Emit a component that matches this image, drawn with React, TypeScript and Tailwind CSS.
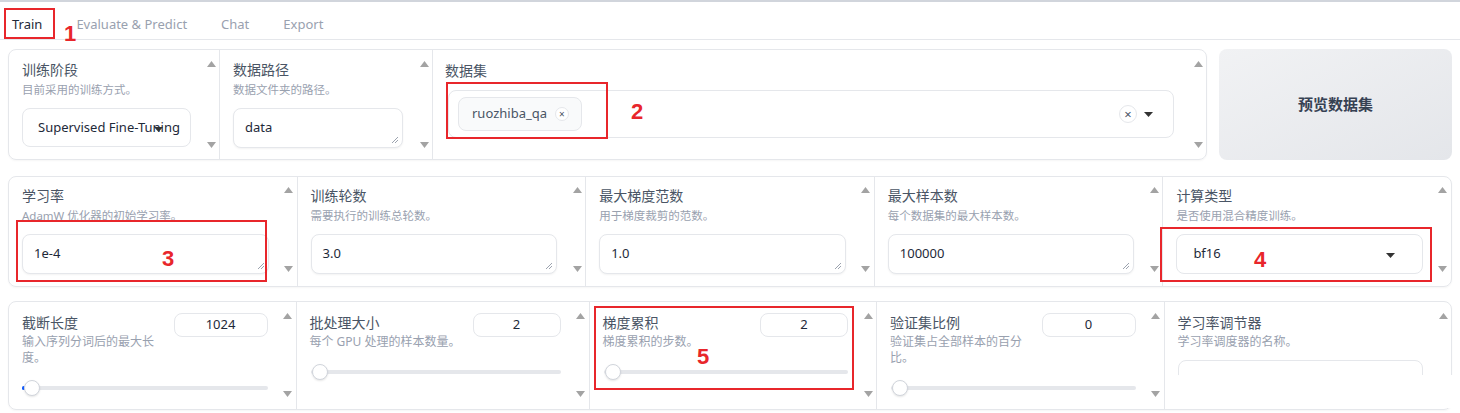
import React from 'react';

const Up = () => (
  <svg width="9" height="6" viewBox="0 0 9 6">
    <path d="M4.5 0L9 6H0z" fill="#a3a3a3" />
  </svg>
);
const Down = () => (
  <svg width="9" height="6" viewBox="0 0 9 6">
    <path d="M0 0h9L4.5 6z" fill="#a3a3a3" />
  </svg>
);
const Caret = () => (
  <svg width="9" height="5" viewBox="0 0 9 5">
    <path d="M0 0h9L4.5 5z" fill="#333" />
  </svg>
);

function Arrows({ top = 'pt-[11px]', bottom = 'pb-[11px]' }: { top?: string; bottom?: string }) {
  return (
    <div className={`w-[16px] shrink-0 flex flex-col items-center justify-between ${top} ${bottom}`}>
      <Up />
      <Down />
    </div>
  );
}

function Grip() {
  return (
    <svg className="absolute right-[3px] bottom-[3px]" width="8" height="8" viewBox="0 0 8 8">
      <path d="M7 1L1 7M7 4L4 7" stroke="#9ca3af" strokeWidth="1" />
    </svg>
  );
}

function TextBox({ value }: { value: string }) {
  return (
    <div className="relative h-[40px] rounded-lg border border-gray-200 bg-white shadow-[0_1px_2px_rgba(0,0,0,0.05)] flex items-center px-[11px] text-[13px] text-gray-800">
      {value}
      <Grip />
    </div>
  );
}

function Label({ text }: { text: string }) {
  return <div className="text-[14px] leading-[20px] text-gray-600">{text}</div>;
}

function Desc({ text, className = '' }: { text: string; className?: string }) {
  return <div className={`text-[11.5px] leading-[16px] text-gray-400 ${className}`}>{text}</div>;
}

function FieldCol({ label, desc, children, last }: { label: string; desc: string; children: React.ReactNode; last?: boolean }) {
  return (
    <div className={`flex-1 flex ${last ? '' : 'border-r border-gray-200'}`}>
      <div className="flex-1 pl-[13px] pr-[12px] pt-[9px]">
        <Label text={label} />
        <Desc text={desc} className="mt-[2px]" />
        <div className="mt-[10px]">{children}</div>
      </div>
      <Arrows top="pt-[10px]" bottom="pb-[14px]" />
    </div>
  );
}

function Slider({ dot }: { dot?: boolean }) {
  return (
    <div className="relative h-[16px] flex items-center">
      <div className="absolute left-[1px] right-0 h-[4px] rounded-full bg-gray-200" />
      {dot && <div className="absolute left-0 w-[3px] h-[4px] rounded-full bg-blue-600" />}
      <div className="absolute left-[2px] w-[16px] h-[16px] rounded-full bg-white border border-gray-300 shadow-[0_1px_2px_rgba(0,0,0,0.1)]" />
    </div>
  );
}

function SliderCol({ label, desc, value, boxW, dot, last, nowrap }: { label: string; desc: string; value: string; boxW: string; dot?: boolean; last?: boolean; nowrap?: boolean }) {
  return (
    <div className={`flex-1 flex ${last ? '' : 'border-r border-gray-200'}`}>
      <div className="flex-1 pl-[13px] pr-[12px] pt-[11px]">
        <div className="flex items-start">
          <div className="flex-1 pr-[12px]">
            <Label text={label} />
            <div className={`mt-[1px] text-[12px] leading-[16px] text-gray-400 ${nowrap ? 'whitespace-nowrap' : ''}`}>{desc}</div>
          </div>
          <div className={`${boxW} h-[24px] shrink-0 rounded-lg border border-gray-200 bg-white flex items-center justify-center text-[13px] text-gray-800`}>
            {value}
          </div>
        </div>
        <div className="mt-[14px]">
          <Slider dot={dot} />
        </div>
      </div>
      <Arrows top="pt-[11px]" bottom="pb-[12px]" />
    </div>
  );
}

function Mark({ className, n, numClass }: { className: string; n: string; numClass: string }) {
  return (
    <>
      <div className={`absolute border-2 border-[#e8262b] ${className}`} />
      <div className={`absolute text-[22px] leading-none font-bold text-[#e8262b] font-['Liberation_Sans',sans-serif] ${numClass}`}>{n}</div>
    </>
  );
}

export default function App() {
  return (
    <div className="relative w-[1460px] h-[413px] overflow-hidden bg-white font-['Noto_Sans','Noto_Sans_CJK_SC',sans-serif]">
      <div className="h-[2px] bg-gray-300" />

      {/* TABS */}
      <div className="h-[38px] flex items-center gap-[34px] pl-[12px] pt-[8px] border-b border-gray-200 text-[13px] text-gray-400">
        <span className="text-gray-800">Train</span>
        <span>Evaluate &amp; Predict</span>
        <span>Chat</span>
        <span>Export</span>
      </div>

      {/* ROW 1 */}
      <div className="flex gap-[12px] mx-[8px] mt-[9px]">
        <div className="w-[1199px] h-[111px] flex rounded-lg border border-gray-200 shadow-[0_1px_2px_rgba(0,0,0,0.04)]">
          <div className="w-[211px] flex border-r border-gray-200">
            <div className="flex-1 pl-[13px] pr-[12px] pt-[10px]">
              <Label text="训练阶段" />
              <Desc text="目前采用的训练方式。" className="mt-[2px]" />
              <div className="relative mt-[10px] h-[39px] rounded-lg border border-gray-200 bg-white flex items-center pl-[15px] text-[13px] text-gray-800 whitespace-nowrap overflow-hidden">
                Supervised Fine-Tuning
                <div className="absolute right-[27px] top-[18px]">
                  <Caret />
                </div>
              </div>
            </div>
            <Arrows />
          </div>
          <div className="w-[213px] flex border-r border-gray-200">
            <div className="flex-1 pl-[13px] pr-[13px] pt-[10px]">
              <Label text="数据路径" />
              <Desc text="数据文件夹的路径。" className="mt-[2px]" />
              <div className="mt-[10px]">
                <TextBox value="data" />
              </div>
            </div>
            <Arrows />
          </div>
          <div className="flex-1 flex">
            <div className="flex-1 pl-[12px] pr-[16px] pt-[11px]">
              <Label text="数据集" />
              <div className="mt-[9px] ml-[3px] h-[48px] rounded-lg border border-gray-200 bg-white flex items-center pl-[9px] pr-[20px]">
                <div className="h-[34px] flex items-center gap-[8px] pl-[13px] pr-[12px] rounded-lg border border-gray-200 bg-gray-50 text-[13px] text-gray-600">
                  ruozhiba_qa
                  <span className="w-[14px] h-[14px] rounded-full bg-white border border-gray-200 flex items-center justify-center text-[10px] leading-none text-gray-600">×</span>
                </div>
                <div className="flex-1" />
                <span className="w-[18px] h-[18px] rounded-full border border-gray-200 flex items-center justify-center text-[13px] leading-none text-gray-600">×</span>
                <div className="ml-[7px]">
                  <Caret />
                </div>
              </div>
            </div>
            <Arrows />
          </div>
        </div>
        <div className="flex-1 h-[111px] rounded-lg bg-gradient-to-br from-[#f1f2f4] to-[#e4e6ea] flex items-center justify-center text-[15px] font-bold text-gray-700">
          预览数据集
        </div>
      </div>

      {/* ROW 2 */}
      <div className="mx-[8px] mt-[16px] h-[111px] flex rounded-lg border border-gray-200 shadow-[0_1px_2px_rgba(0,0,0,0.04)]">
        <FieldCol label="学习率" desc="AdamW 优化器的初始学习率。">
          <TextBox value="1e-4" />
        </FieldCol>
        <FieldCol label="训练轮数" desc="需要执行的训练总轮数。">
          <TextBox value="3.0" />
        </FieldCol>
        <FieldCol label="最大梯度范数" desc="用于梯度裁剪的范数。">
          <TextBox value="1.0" />
        </FieldCol>
        <FieldCol label="最大样本数" desc="每个数据集的最大样本数。">
          <TextBox value="100000" />
        </FieldCol>
        <FieldCol label="计算类型" desc="是否使用混合精度训练。" last>
          <div className="relative h-[40px] rounded-lg border border-gray-200 bg-white flex items-center pl-[16px] text-[13px] text-gray-800">
            bf16
            <div className="absolute right-[27px] top-[18px]">
              <Caret />
            </div>
          </div>
        </FieldCol>
      </div>

      {/* ROW 3 */}
      <div className="mx-[8px] mt-[14px] h-[109px] flex rounded-lg border border-gray-200 shadow-[0_1px_2px_rgba(0,0,0,0.04)]">
        <SliderCol label="截断长度" desc="输入序列分词后的最大长度。" value="1024" boxW="w-[94px]" dot />
        <SliderCol label="批处理大小" desc="每个 GPU 处理的样本数量。" value="2" boxW="w-[88px]" nowrap />
        <SliderCol label="梯度累积" desc="梯度累积的步数。" value="2" boxW="w-[88px]" />
        <SliderCol label="验证集比例" desc="验证集占全部样本的百分比。" value="0" boxW="w-[94px]" />
        <div className="flex-1 flex">
          <div className="flex-1 pl-[13px] pr-[12px] pt-[11px]">
            <Label text="学习率调节器" />
            <div className="mt-[1px] text-[12px] leading-[16px] text-gray-400">学习率调度器的名称。</div>
            <div className="mt-[10px] h-[40px] rounded-lg border border-gray-200 bg-white" />
          </div>
          <Arrows top="pt-[11px]" bottom="pb-[12px]" />
        </div>
      </div>

      {/* white patch over the bottom right, as in the capture */}
      <div className="absolute left-[1165px] top-[375px] w-[300px] h-[33px] bg-white rounded-tl-[14px]" />

      {/* ANNOTATIONS */}
      <Mark n="1" className="left-[4px] top-[8px] w-[51px] h-[31px]" numClass="left-[64px] top-[23px]" />
      <Mark n="2" className="left-[446px] top-[82px] w-[162px] h-[57px]" numClass="left-[631px] top-[101px]" />
      <Mark n="3" className="left-[16px] top-[220px] w-[251px] h-[62px]" numClass="left-[162px] top-[248px]" />
      <Mark n="4" className="left-[1160px] top-[227px] w-[272px] h-[55px]" numClass="left-[1254px] top-[249px]" />
      <Mark n="5" className="left-[594px] top-[306px] w-[260px] h-[84px]" numClass="left-[697px] top-[346px]" />
    </div>
  );
}
